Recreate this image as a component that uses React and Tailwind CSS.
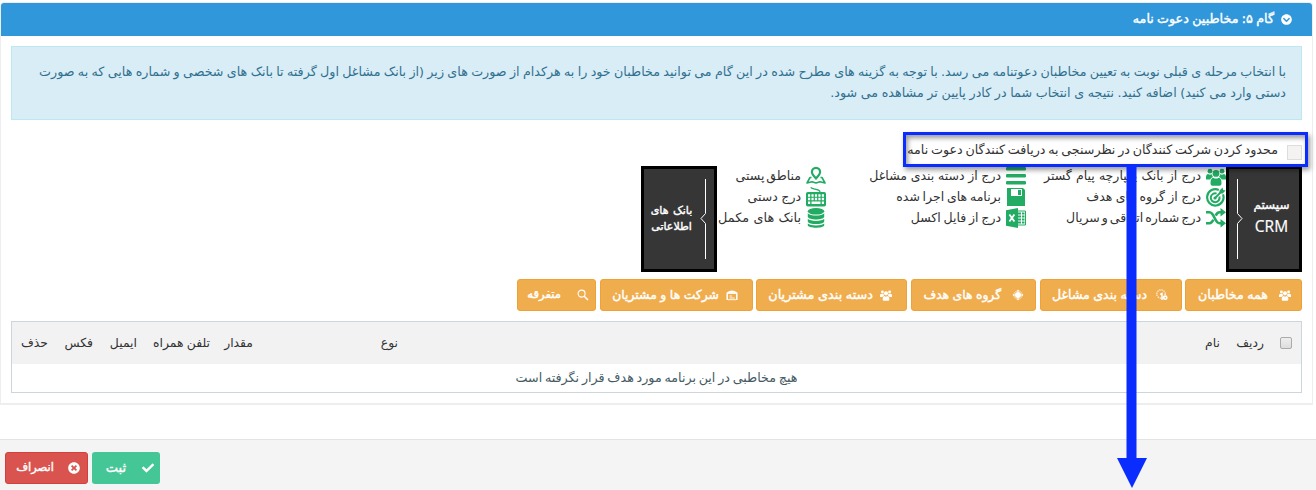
import React from "react";
import { FaCheck, FaTimesCircle, FaChevronCircleDown } from "react-icons/fa";

const G = "#22ab62";

function PeopleIcon({ className }) {
  return (
    <svg viewBox="0 0 20 18" className={className} fill="currentColor">
      <circle cx="4" cy="3.200" r="2.400" />
      <circle cx="16" cy="3.200" r="2.400" />
      <circle cx="10" cy="5.400" r="3.400" />
      <path d="M0 11V8.500Q.2 6 2 6Q4 7.200 5.800 6.200Q6.200 8 7 9Q4.800 9.600 4.200 11.500H1Q0 11.500 0 11Z" />
      <path d="M20 11V8.500Q19.800 6 18 6Q16 7.200 14.200 6.200Q13.800 8 13 9Q15.200 9.600 15.800 11.500H19Q20 11.500 20 11Z" />
      <path d="M4.500 15.500Q4.500 9.800 7.200 9.700Q10 11.500 12.800 9.700Q15.500 9.800 15.500 15.500Q15.500 17.800 13.500 17.800H6.500Q4.500 17.800 4.500 15.500Z" />
    </svg>
  );
}

function TargetIcon() {
  return (
    <svg viewBox="0 0 20 20" className="h-5 w-5" fill="none" stroke={G}>
      <path d="M12.800 2.900A8.200 8.200 0 1 0 17 7.400" strokeWidth="2.200" />
      <path d="M10.600 6.600A4.400 4.400 0 1 0 13.400 9.600" strokeWidth="2" />
      <path d="M9 11 15.500 4.500" strokeWidth="1.800" />
      <path d="M13.500 6.500V3.600L16.600.6 17.200 3 19.600 3.600 16.600 6.500Z" fill={G} stroke="none" />
      <circle cx="9" cy="11" r="1.600" fill={G} stroke="none" />
    </svg>
  );
}

function ShuffleIcon() {
  return (
    <svg viewBox="0 0 20 20" className="h-5 w-5" fill="none" stroke={G} strokeWidth="2.600">
      <path d="M0 4.200H3.500C8.500 4.200 8.500 15.200 13.500 15.200H16" />
      <path d="M0 15.200H3.500C5.500 15.200 6.500 13.700 7.300 11.600M9.700 7.600C10.600 5.600 11.500 4.200 13.500 4.200H16" />
      <path d="M14.500 0 20 4.200 14.500 8.400ZM14.500 11 20 15.200 14.500 19.400Z" fill={G} stroke="none" />
    </svg>
  );
}

function LinesIcon() {
  return (
    <svg viewBox="0 0 20 20" className="h-5 w-5" fill={G}>
      <rect y="1" width="20" height="3.500" rx="1.200" />
      <rect y="8" width="20" height="3.500" rx="1.200" />
      <rect y="15" width="20" height="3.500" rx="1.200" />
    </svg>
  );
}

function DiskIcon() {
  return (
    <svg viewBox="0 0 20 20" className="h-5 w-5">
      <path d="M1 1H17L19 3V19H1Z" fill={G} />
      <path d="M5 2H16V9H5Z" fill="#fff" />
      <path d="M12 3H15V8H12Z" fill={G} />
    </svg>
  );
}

function ExcelIcon() {
  return (
    <svg viewBox="0 0 20 20" className="h-5 w-5">
      <path d="M0 2.300 12 0V20L0 17.700Z" fill={G} />
      <path d="M12 3H19.500V17H12" fill="none" stroke={G} strokeWidth="1" />
      <path d="M12 5.500H15M16 5.500H18.500M12 8.500H15M16 8.500H18.500M12 11.500H15M16 11.500H18.500M12 14.500H15M16 14.500H18.500" stroke={G} strokeWidth="1.800" />
      <path d="M3.400 6.500 8.400 13.500M8.400 6.500 3.400 13.500" stroke="#fff" strokeWidth="1.800" />
    </svg>
  );
}

function MapIcon() {
  return (
    <svg viewBox="0 0 20 20" className="h-5 w-5" fill="none" stroke={G}>
      <path d="M10 12.500C7.500 9.800 5.900 8.200 5.900 6A4.100 4.100 0 0 1 14.100 6C14.100 8.200 12.500 9.800 10 12.500Z" strokeWidth="2.200" />
      <path d="M5.500 11.500H4L1 17 6 15.700 10 17 14 15.700 19 17 16 11.500H14.500" strokeWidth="1.600" strokeLinejoin="round" />
    </svg>
  );
}

function KeyboardIcon() {
  return (
    <svg viewBox="0 0 20 20" className="h-5 w-5">
      <path d="M5 .3C5 3 14 1 14 5" fill="none" stroke={G} strokeWidth="1.300" />
      <rect y="5" width="20" height="14.500" rx="1.800" fill={G} />
      <path d="M2 8.500H18M2 12H18" stroke="#fff" strokeWidth="2.500" strokeDasharray="2.200 1.250" />
      <path d="M2 15.800H4.200M5.500 15.800H14.500M15.800 15.800H18" stroke="#fff" strokeWidth="2.400" />
    </svg>
  );
}

function DatabaseIcon() {
  return (
    <svg viewBox="0 0 20 20" className="h-5 w-5" fill={G}>
      <ellipse cx="10" cy="3.300" rx="8.200" ry="3.300" />
      <path d="M1.800 5.200C4 8.300 16 8.300 18.200 5.200V9C17 12.300 3 12.300 1.800 9Z" />
      <path d="M1.800 10.800C4 13.600 16 13.600 18.200 10.800V13.700C17 16.800 3 16.800 1.800 13.700Z" />
      <path d="M1.800 15.500C4 18 16 18 18.200 15.500V17.600C17 20.600 3 20.600 1.800 17.600Z" />
    </svg>
  );
}

const columns = [
  {
    width: "w-[200px]",
    items: [
      { icon: <PeopleIcon className="mt-[2px] h-[18px] w-5" />, label: "درج از بانک یکپارچه پیام گستر", spacing: "[word-spacing:0.2px]" },
      { icon: <TargetIcon />, label: "درج از گروه های هدف", spacing: "[word-spacing:-0.5px]" },
      { icon: <ShuffleIcon />, label: "درج شماره اتفاقی و سریال", spacing: "[word-spacing:-2px]" },
    ],
  },
  {
    width: "w-[200px]",
    items: [
      { icon: <LinesIcon />, label: "درج از دسته بندی مشاغل", spacing: "[word-spacing:-0.3px]" },
      { icon: <DiskIcon />, label: "برنامه های اجرا شده", spacing: "[word-spacing:-1.2px]" },
      { icon: <ExcelIcon />, label: "درج از فایل اکسل", spacing: "[word-spacing:-1.2px]" },
    ],
  },
  {
    width: "w-[109px]",
    items: [
      { icon: <MapIcon />, label: "مناطق پستی", spacing: "[word-spacing:-2px]" },
      { icon: <KeyboardIcon />, label: "درج دستی", spacing: "[word-spacing:-0.5px]" },
      { icon: <DatabaseIcon />, label: "بانک های مکمل", spacing: "text-[12.8px] [word-spacing:0.3px]" },
    ],
  },
];

function SystemCard({ children }) {
  return (
    <div className="flex h-[106px] w-[76px] shrink-0 items-center border-[3px] border-black bg-[#363636] text-white">
      <div className="-mt-[7px] flex flex-1 flex-col items-center">{children}</div>
      <svg viewBox="0 0 8 80" className="me-[7px] h-20 w-2 shrink-0" fill="none" stroke="#fff">
        <path d="M1.500 0V34.500L6 39.500 1.500 44.500V80" strokeWidth="1" />
      </svg>
    </div>
  );
}

function BankCard({ children }) {
  return (
    <div className="flex h-[106px] w-[76px] shrink-0 items-center border-[3px] border-black bg-[#363636] text-white">
      <svg viewBox="0 0 8 80" className="ms-[7px] h-20 w-2 shrink-0" fill="none" stroke="#fff">
        <path d="M6.500 0V34.500L2 39.500 6.500 44.500V80" strokeWidth="1" />
      </svg>
      <div className="flex flex-1 flex-col items-center">{children}</div>
    </div>
  );
}

function SparkIcon() {
  return (
    <svg viewBox="0 0 12 12" className="h-3 w-3" fill="#fff">
      <circle cx="6" cy="6" r="3" />
      <path d="M6 .5 7.500 2.500H4.500ZM6 11.500 4.500 9.500H7.500ZM.5 6 2.500 4.500V7.500ZM11.500 6 9.500 7.500V4.500Z" />
      <circle cx="6" cy="6" r="4.200" fill="none" stroke="#fff" strokeWidth=".7" opacity=".7" />
    </svg>
  );
}

function JobsIcon() {
  return (
    <svg viewBox="0 0 12 12" className="h-3 w-3" fill="none" stroke="#fff">
      <circle cx="5" cy="5" r="4.200" strokeWidth="1.200" strokeDasharray="1.200 1" />
      <path d="M4.200 5.500 6 4.500V11" strokeWidth="1.500" />
      <circle cx="9.200" cy="8.700" r="1.600" strokeWidth="1.600" />
    </svg>
  );
}

function StoreIcon() {
  return (
    <svg viewBox="0 0 12 12" className="h-3 w-3" fill="none" stroke="#fff">
      <path d="M1.200 11V4Q6 .4 10.800 4V11" strokeWidth="1.500" />
      <path d="M2 4H10" strokeWidth="1.800" />
      <path d="M3.500 7H6M3.500 9H8.500M2 10.700H10" strokeWidth=".9" />
    </svg>
  );
}

function SearchIcon() {
  return (
    <svg viewBox="0 0 12 12" className="h-3 w-3" fill="none" stroke="#fff">
      <circle cx="4.600" cy="4.600" r="3.500" strokeWidth="1.100" />
      <path d="M7.200 7.200 11 11" strokeWidth="1.500" />
    </svg>
  );
}

const filters = [
  { label: "همه مخاطبان", box: "w-[117px] ps-[10px] gap-[11px]", text: "text-[12.6px]", icon: <PeopleIcon className="h-[11px] w-3" /> },
  { label: "دسته بندی مشاغل", box: "w-[142px] me-px ps-[13px] gap-[9px]", text: "text-[12.5px]", icon: <JobsIcon /> },
  { label: "گروه های هدف", box: "w-[125px] me-px ps-[11px] gap-[11px]", text: "text-[12.3px]", icon: <SparkIcon /> },
  { label: "دسته بندی مشتریان", box: "w-[151px] ps-[14px] gap-[7px]", text: "text-[12.8px]", icon: <PeopleIcon className="h-[11px] w-3" /> },
  { label: "شرکت ها و مشتریان", box: "w-[153px] me-px ps-[14px] gap-[7px]", text: "text-[12.4px]", icon: <StoreIcon /> },
  { label: "متفرقه", box: "w-[79px] ps-[6px] gap-[16px]", text: "text-[11.6px]", icon: <SearchIcon /> },
];

const headings = [
  { label: "ردیف", box: "w-[44px]" },
  { label: "نام", box: "w-[822px]" },
  { label: "نوع", box: "w-[145px]" },
  { label: "مقدار", box: "w-[43px]" },
  { label: "تلفن همراه", box: "w-[73px]" },
  { label: "ایمیل", box: "w-[44px]" },
  { label: "فکس", box: "w-[45px]" },
  { label: "حذف", box: "w-[36px]" },
];

export default function App() {
  return (
    <div dir="rtl" className="relative h-[490px] w-[1316px] overflow-hidden bg-white pt-[2px] font-['DejaVu_Sans',sans-serif] text-[12.7px] text-[#333] whitespace-nowrap [word-spacing:-0.7px]">
      <section className="ms-[3px] h-[403px] w-[1313px] rounded-t border border-b-2 border-[#eee]">
        <header className="flex h-[33px] items-center gap-[7px] rounded-t-[3px] bg-[#3197db] ps-[20px] text-white">
          <FaChevronCircleDown className="h-[11px] w-[11px]" />
          <span className="-mt-px [-webkit-text-stroke:0.4px_#fff]">گام ۵: مخاطبین دعوت نامه</span>
        </header>

        <div className="px-[10px] pt-[10px]">
          <div className="h-[74px] border border-[#bce8f1] bg-[#d9edf7] px-[15px] pt-[14px] leading-[21px] text-[#31708f]">
            <div>با انتخاب مرحله ی قبلی نوبت به تعیین مخاطبان دعوتنامه می رسد. با توجه به گزینه های مطرح شده در این گام می توانید مخاطبان خود را به هرکدام از صورت های زیر (از بانک مشاغل اول گرفته تا بانک های شخصی و شماره هایی که به صورت</div>
            <div className="[word-spacing:-0.4px]">دستی وارد می کنید) اضافه کنید. نتیجه ی انتخاب شما در کادر پایین تر مشاهده می شود.</div>
          </div>

          <label className="mt-[17px] mb-[3px] flex h-[26px] items-center gap-[9px] leading-[20px]">
            <span className="mt-[5px] h-[15px] w-[15px] border border-[#ddd] bg-[#f5f2f2]" />
            <span className="[word-spacing:-1.3px]">محدود کردن شرکت کنندگان در نظرسنجی به دریافت کنندگان دعوت نامه</span>
          </label>

          <div className="flex text-[12.5px]">
            <SystemCard>
              <span className="text-[12px] leading-[20px] [-webkit-text-stroke:0.4px_#fff]">سیستم</span>
              <span className="font-['Open_Sans',sans-serif] text-[15.500px] leading-[22px] [-webkit-text-stroke:0.2px_#fff]">CRM</span>
            </SystemCard>
            {columns.map((column, i) => (
              <ul key={i} className={column.width}>
                {column.items.map((item) => (
                  <li key={item.label} className={`flex h-[21px] items-start gap-[5px] leading-[19px] ${item.spacing}`}>
                    <span className="h-5 w-5 shrink-0 text-[#22ab62]">{item.icon}</span>
                    <span>{item.label}</span>
                  </li>
                ))}
              </ul>
            ))}
            <BankCard>
              <span className="text-[11px] leading-[16px] [-webkit-text-stroke:0.4px_#fff] [word-spacing:1px]">بانک های</span>
              <span className="text-[11px] leading-[16px] [-webkit-text-stroke:0.4px_#fff]">اطلاعاتی</span>
            </BankCard>
          </div>

          <div className="mt-[7px] flex gap-[3px]">
            {filters.map((f) => (
              <button key={f.label} className={`flex h-8 shrink-0 items-center rounded-[3px] border border-[#eea236] bg-[#f0ad4e] text-white ${f.text} ${f.box}`}>
                <span className="shrink-0">{f.icon}</span>
                <span className="[-webkit-text-stroke:0.4px_#fff] [word-spacing:-0.4px]">{f.label}</span>
              </button>
            ))}
          </div>

          <div className="mt-[10px] h-[72px] border border-[#cdd6da]">
            <div className="flex h-[42px] items-center bg-[#f2f2f2] text-[12.4px]">
              <span className="ms-[9px] me-[16px] h-3 w-3 shrink-0 rounded-[2px] border border-[#aaa] bg-linear-to-b from-[#eee] to-[#ddd]" />
              {headings.map((h) => (
                <span key={h.label} className={`shrink-0 ${h.box}`}>{h.label}</span>
              ))}
            </div>
            <div className="flex h-7 items-center justify-center text-[#445a65] [word-spacing:-1.3px]">هیچ مخاطبی در این برنامه مورد هدف قرار نگرفته است</div>
          </div>
        </div>
      </section>

      <footer className="mt-[34px] flex h-[51px] justify-end gap-1 border-t border-[#e3e3e3] bg-[#f4f4f4] pe-[5px] pt-[12px] text-white">
        <button className="flex h-8 w-[68px] items-center gap-[16px] rounded-[3px] bg-[#45c696] ps-[6px] text-[13px]">
          <FaCheck className="h-3 w-3" />
          <span className="[-webkit-text-stroke:0.4px_#fff]">ثبت</span>
        </button>
        <button className="flex h-8 w-[83px] items-center gap-[14px] rounded-[3px] border border-[#d43f3a] bg-[#d9534f] ps-[7px] text-[11.5px]">
          <FaTimesCircle className="h-3 w-3" />
          <span className="[-webkit-text-stroke:0.4px_#fff]">انصراف</span>
        </button>
      </footer>

      <div className="absolute top-[132px] left-[903px] h-[35px] w-[405px] border-[3px] border-[#0a2cff] shadow-[2px_3px_5px_rgba(0,0,0,0.4),inset_2px_3px_5px_rgba(0,0,0,0.4)]" />
      <svg viewBox="0 0 30 323" className="absolute top-[166px] left-[1117px] h-[323px] w-[30px]" fill="#0a2cff">
        <path d="M9.500 0H19.500V292H30L15 322 0 292H9.500Z" />
      </svg>
    </div>
  );
}
